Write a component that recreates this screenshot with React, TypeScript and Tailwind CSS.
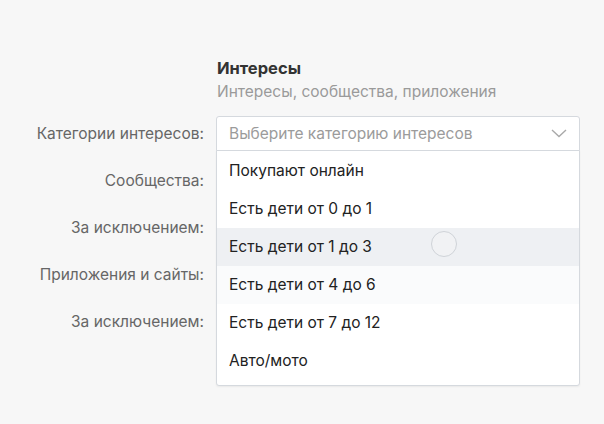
import React from 'react';

const labels = [
  'Категории интересов:',
  'Сообщества:',
  'За исключением:',
  'Приложения и сайты:',
  'За исключением:',
];

const options = [
  'Покупают онлайн',
  'Есть дети от 0 до 1',
  'Есть дети от 1 до 3',
  'Есть дети от 4 до 6',
  'Есть дети от 7 до 12',
  'Авто/мото',
];

const App: React.FC = () => {
  return (
    <div
      className="w-[604px] h-[424px] overflow-hidden bg-[#f7f7f7] text-[15.5px]"
      style={{ fontFamily: 'Inter, Roboto, sans-serif' }}
    >
      <div className="pt-[57px] pl-[217px]">
        <h2 className="font-bold text-[16.5px] text-[#333] leading-[22px]">Интересы</h2>
        <p className="text-[#9a9a9a] leading-[22px] mt-[2px]">Интересы, сообщества, приложения</p>
      </div>

      <div className="flex mt-[13px]">
        <div className="w-[216px] flex flex-col gap-[12px] pr-[12px]">
          {labels.map((l, i) => (
            <div key={i} className="h-[35px] flex items-center justify-end text-[#666]">
              {l}
            </div>
          ))}
        </div>

        <div className="relative w-[364px]">
          <div className="h-[35px] flex items-center justify-between px-[12px] bg-white border border-[#d5d9de] rounded-t-[3px]">
            <span className="text-[#9b9b9b]">Выберите категорию интересов</span>
            <svg width="16" height="9" viewBox="0 0 16 9" fill="none">
              <path d="M1 1l7 6.5L15 1" stroke="#a9a9a9" strokeWidth="1.4" />
            </svg>
          </div>

          <div className="absolute left-0 right-0 top-[34px] bg-white border border-[#d5d9de] rounded-b-[3px] pt-[1px] pb-[5px] shadow-[0_1px_2px_rgba(0,0,0,0.06)]">
            {options.map((o, i) => (
              <div
                key={i}
                className={
                  'h-[38px] flex items-center px-[12px] text-[#222] ' +
                  (i === 2 ? 'bg-[#eef0f3]' : i === 3 ? 'bg-[#fafbfc]' : '')
                }
              >
                {o}
              </div>
            ))}
            <div className="absolute left-[214px] top-[80px] w-[26px] h-[26px] rounded-full border border-[#cfd3d8] bg-[#f1f2f4]" />
          </div>
        </div>
      </div>
    </div>
  );
};

export default App;
